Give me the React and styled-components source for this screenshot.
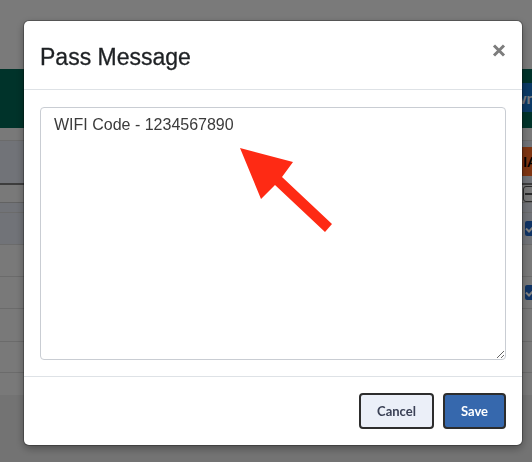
import React from "react";
import styled, { createGlobalStyle } from "styled-components";

const GlobalStyle = createGlobalStyle`
  html, body {
    margin: 0;
    padding: 0;
    overflow: hidden;
    font-family: "Liberation Sans", Arial, sans-serif;
  }
`;

// page sitting behind the dialog
const rows = [
  { h: 13, tone: "gray" },
  { h: 44, tone: "blue", right: "head", thick: true },
  { h: 18, tone: "gray", right: "box", dark: true },
  { h: 10, tone: "blue" },
  { h: 32, tone: "blue", right: "check" },
  { h: 32, tone: "gray" },
  { h: 32, tone: "gray", right: "check" },
  { h: 33, tone: "gray" },
  { h: 31, tone: "gray" },
  { h: 22, tone: "gray", last: true },
];

const Page = styled.div`
  height: 462px;
  background: #f4f4f4;
  display: flex;
  flex-direction: column;
  overflow: hidden;
`;

const TopGap = styled.div`
  height: 69px;
  flex: none;
`;

const GreenBar = styled.div`
  height: 59px;
  flex: none;
  background: #006654;
  display: flex;
  justify-content: flex-end;
  align-items: center;
`;

const DownloadBtn = styled.div`
  height: 29px;
  margin-right: -46px;
  margin-top: -2px;
  padding: 0 12px;
  background: #1674cc;
  color: #f0f4ff;
  font: 700 16px Lato, sans-serif;
  display: flex;
  align-items: center;
`;

const Row = styled.div`
  box-sizing: border-box;
  height: ${(p) => p.$h}px;
  flex: none;
  background: ${(p) => (p.$tone === "blue" ? "#e3e7f1" : "#f3f3f3")};
  border-bottom: ${(p) =>
    p.$last ? "none" : p.$thick ? "2px solid #7a7a7a" : p.$dark ? "1px solid #c4c4c4" : "1px solid #d6d6d6"};
  display: flex;
  justify-content: flex-end;
  align-items: center;
`;

const RightCell = styled.div`
  width: 30px;
  display: flex;
  align-items: center;
  padding-left: 20px;
  box-sizing: border-box;
`;

const HeadCell = styled.div`
  width: 30px;
  height: 29px;
  margin-top: -1px;
  background: #ff6a24;
  color: #000;
  font: 700 14px Lato, sans-serif;
  display: flex;
  align-items: center;
  padding-left: 1px;
  box-sizing: border-box;
`;

const MiniBox = styled.div`
  width: 16px;
  height: 14px;
  margin-left: 1px;
  border: 1px solid #555;
  border-radius: 3px;
  display: flex;
  align-items: center;
  &::after {
    content: "";
    width: 10px;
    height: 2px;
    margin-left: 1px;
    background: #555;
  }
`;

const CheckBox = styled.div`
  width: 15px;
  height: 15px;
  margin-left: 3px;
  border-radius: 2px;
  background: #1f66c8;
  display: flex;
  align-items: center;
  justify-content: center;
`;

const Rest = styled.div`
  flex: 1;
  background: #e6e6e6;
`;

// dialog
const Backdrop = styled.div`
  position: fixed;
  inset: 0;
  background: rgba(0, 0, 0, 0.5);
  padding: 21px 0 0 24px;
`;

const Dialog = styled.div`
  width: 498px;
  height: 424px;
  background: #fff;
  border-radius: 5px;
  box-shadow: 0 0 0 1px rgba(0, 0, 0, 0.25), 0 3px 9px rgba(0, 0, 0, 0.35);
  display: flex;
  flex-direction: column;
`;

const Header = styled.div`
  box-sizing: border-box;
  height: 69px;
  padding: 23px 16px 0 16px;
  border-bottom: 1px solid #dee2e6;
  display: flex;
  justify-content: space-between;
  align-items: flex-start;
`;

const Title = styled.h4`
  margin: 0;
  font: 400 23px/27px "Liberation Sans", Arial, sans-serif;
  color: #1e2124;
  -webkit-text-stroke: 0.3px #1e2124;
`;

const CloseBtn = styled.button`
  margin-top: 0;
  padding: 0;
  border: none;
  background: none;
  width: 14px;
  height: 13px;
  display: flex;
  cursor: pointer;
`;

const Body = styled.div`
  position: relative;
  padding: 17px 16px 16px;
`;

const MessageInput = styled.textarea`
  display: block;
  box-sizing: border-box;
  width: 100%;
  height: 253px;
  margin: 0;
  padding: 5px 13px;
  border: 1px solid #c9cdd3;
  border-radius: 4px;
  font: 400 16px/24px "Liberation Sans", Arial, sans-serif;
  color: #3b3b3b;
  outline: none;
  resize: vertical;
`;

const Pointer = styled.svg`
  position: absolute;
  left: 0;
  top: 0;
  pointer-events: none;
`;

const Footer = styled.div`
  border-top: 1px solid #dee2e6;
  padding: 16px;
  display: flex;
  justify-content: flex-end;
  gap: 9px;
`;

const Button = styled.button`
  box-sizing: border-box;
  height: 36px;
  padding: 0 16px;
  border: 2px solid #2d2d2d;
  border-radius: 4px;
  font: 700 13px Lato, sans-serif;
  cursor: pointer;
  background: ${(p) => (p.$primary ? "#3668ad" : "#ebeff8")};
  color: ${(p) => (p.$primary ? "#ffffff" : "#3a4055")};
`;

const renderRight = (kind) => {
  if (kind === "head") return <HeadCell>IA</HeadCell>;
  if (kind === "box") return <MiniBox />;
  if (kind === "check")
    return (
      <CheckBox>
        <svg width="11" height="9" viewBox="0 0 11 9">
          <path d="M1 4.5 L4 7.5 L10 1" fill="none" stroke="#fff" strokeWidth="2" />
        </svg>
      </CheckBox>
    );
  return null;
};

export default function App() {
  return (
    <>
      <GlobalStyle />
      <Page>
        <TopGap />
        <GreenBar>
          <DownloadBtn>Download</DownloadBtn>
        </GreenBar>
        {rows.map((r, i) => (
          <Row key={i} $h={r.h} $tone={r.tone} $thick={r.thick} $dark={r.dark} $last={r.last}>
            <RightCell>{renderRight(r.right)}</RightCell>
          </Row>
        ))}
        <Rest />
      </Page>

      <Backdrop>
        <Dialog>
          <Header>
            <Title>Pass Message</Title>
            <CloseBtn aria-label="Close">
              <svg width="14" height="13" viewBox="0 0 14 13">
                <path d="M2 1.5 L12 11.5 M12 1.5 L2 11.5" stroke="#7d7d7d" strokeWidth="3" />
              </svg>
            </CloseBtn>
          </Header>
          <Body>
            <MessageInput defaultValue="WIFI Code - 1234567890" />
            <Pointer width="498" height="286" viewBox="0 0 498 286">
              <polygon
                points="216,58 269,72 258,87 308,134 301,142 251,95 237,109"
                fill="#fe2a14"
              />
            </Pointer>
          </Body>
          <Footer>
            <Button>Cancel</Button>
            <Button $primary>Save</Button>
          </Footer>
        </Dialog>
      </Backdrop>
    </>
  );
}
